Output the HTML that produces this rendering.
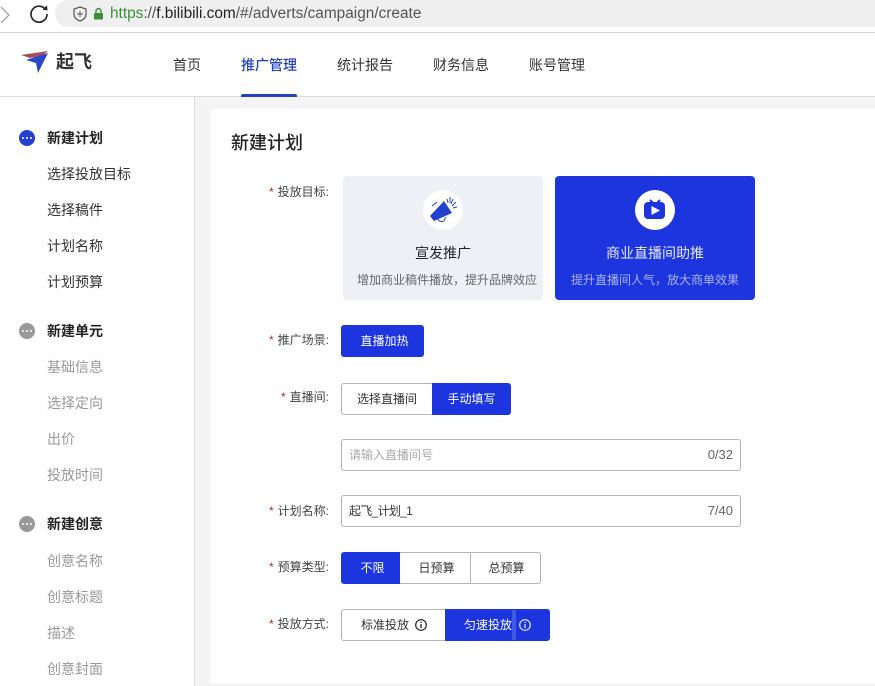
<!DOCTYPE html>
<html lang="zh"><head><meta charset="utf-8"><style>
html,body{margin:0;padding:0}
body{width:875px;height:686px;overflow:hidden;position:relative;background:#fff;font-family:"Liberation Sans","Noto Sans CJK SC",sans-serif;color:#333}
.a{position:absolute;white-space:nowrap}
.t{position:absolute;white-space:nowrap;line-height:20px;font-size:14px;transform:translateY(-50%)}
.lb{font-size:12px;color:#444;text-align:right;width:70px;left:259px}
.lb i{font-style:normal;color:#a0342c;margin-right:4px}
.btn{position:absolute;box-sizing:border-box;height:32px;line-height:30px;text-align:center;font-size:12px;border:1px solid #b5b5b5;background:#fff;color:#333}
.on{background:#1c35df;border-color:#1c35df;color:#fff}
.inp{position:absolute;left:341px;width:400px;height:32px;box-sizing:border-box;border:1px solid #b5b5b5;border-radius:3px;font-size:12px;line-height:30px;padding:0 7px;color:#333}
.inp span{position:absolute;right:7px;top:0;color:#666;font-size:13px}
.dot{position:absolute;left:19px;width:16px;height:16px;border-radius:50%}
.dot b{position:absolute;top:7px;width:2px;height:2px;background:#fff;border-radius:50%}
.s{left:47px;font-size:14px}
.h{font-weight:bold;font-size:14px;color:#222}
.g{color:#999}
</style></head><body>
<div class="a" style="left:0;top:0;width:875px;height:32px;background:#fff;border-bottom:1px solid #d4d4d4"></div>
<div class="a" style="left:55px;top:0;width:820px;height:27px;background:#efefef;border-radius:13px 0 0 13px"></div>
<svg class="a" style="left:0;top:5px" width="12" height="20"><path d="M1 2 L9 10 L1 18" fill="none" stroke="#999" stroke-width="1.2"/></svg>
<svg class="a" style="left:28px;top:3px" width="22" height="22"><path d="M17.5 6.5 A8 8 0 1 0 19 11" fill="none" stroke="#222" stroke-width="1.6"/><path d="M14.5 6.5 L19.5 7.5 L19 2.5Z" fill="#222"/></svg>
<svg class="a" style="left:72px;top:5px" width="16" height="18"><path d="M8 2 L14 4 V9 C14 13 11 15 8 16 C5 15 2 13 2 9 V4Z" fill="none" stroke="#555" stroke-width="1.2"/><path d="M8 6 V12 M5 9 H11" stroke="#555"/></svg>
<svg class="a" style="left:93px;top:7px" width="11" height="13"><path d="M3 6 V4 A2.5 2.5 0 0 1 8 4 V6" fill="none" stroke="#3a8e3a" stroke-width="1.4"/><rect x="1" y="6" width="9" height="6.5" rx="1" fill="#3a8e3a"/></svg>
<div class="a" style="left:110px;top:5px;font-size:15.4px;line-height:18px;color:#555"><span style="color:#3a8e3a">https</span>://<span style="color:#222">f.bilibili.com</span>/#/adverts/campaign/create</div>

<svg class="a" style="left:20px;top:50px" width="29" height="25"><path d="M1 5 L28 1 L22 6 L10 8Z" fill="#a84a5e"/><path d="M6 10 L28 3 L18 23 L16 13Z" fill="#2b46c8"/></svg>
<div class="a" style="left:56px;top:49px;font-size:18px;line-height:26px;font-weight:700;color:#333">起飞</div>
<div class="t" style="left:173px;top:65px;color:#333">首页</div>
<div class="t" style="left:241px;top:65px;color:#2340c0;font-weight:500">推广管理</div>
<div class="t" style="left:337px;top:65px">统计报告</div>
<div class="t" style="left:433px;top:65px">财务信息</div>
<div class="t" style="left:529px;top:65px">账号管理</div>

<div class="a" style="left:0;top:96px;width:875px;height:1px;background:#ddd"></div>
<div class="a" style="left:241px;top:94px;width:56px;height:3px;background:#2340c0;border-radius:2px 2px 0 0"></div>
<div class="a" style="left:194px;top:97px;width:681px;height:589px;background:#f4f4f5;border-left:1px solid #ddd"></div>
<div class="a" style="left:211px;top:109px;width:664px;height:574px;background:#fff;border-radius:4px 0 0 0"></div>

<div class="dot" style="top:130px;background:#2340d0"><b style="left:3px"></b><b style="left:7px"></b><b style="left:11px"></b></div>
<div class="t s h" style="top:138px">新建计划</div>
<div class="t s" style="top:174px">选择投放目标</div>
<div class="t s" style="top:210px">选择稿件</div>
<div class="t s" style="top:246px">计划名称</div>
<div class="t s" style="top:282px">计划预算</div>
<div class="dot" style="top:323px;background:#999"><b style="left:3px"></b><b style="left:7px"></b><b style="left:11px"></b></div>
<div class="t s h" style="top:331px">新建单元</div>
<div class="t s g" style="top:367px">基础信息</div>
<div class="t s g" style="top:403px">选择定向</div>
<div class="t s g" style="top:439px">出价</div>
<div class="t s g" style="top:475px">投放时间</div>
<div class="dot" style="top:516px;background:#999"><b style="left:3px"></b><b style="left:7px"></b><b style="left:11px"></b></div>
<div class="t s h" style="top:524px">新建创意</div>
<div class="t s g" style="top:561px">创意名称</div>
<div class="t s g" style="top:597px">创意标题</div>
<div class="t s g" style="top:633px">描述</div>
<div class="t s g" style="top:669px">创意封面</div>

<div class="t" style="left:231px;top:143px;font-size:18px;font-weight:500;color:#222">新建计划</div>

<div class="t lb" style="top:192px"><i>*</i>投放目标:</div>
<div class="a" style="left:343px;top:176px;width:200px;height:124px;background:#eef0f6;border-radius:4px"></div>
<div class="a" style="left:423px;top:190px;width:40px;height:40px;background:#fff;border-radius:50%"></div>
<svg class="a" style="left:423px;top:190px" width="40" height="40"><path d="M7 26 L21 11 L29 23 L11 31Z" fill="#2340d0"/><path d="M15 29 a3.5 3.5 0 0 0 7 -2" fill="none" stroke="#2340d0"/><path d="M24 9 L25 13 M27 7 L27 13 M30 9 L28 14 M33 12 L29 16 M34 17 L30 18 M9 16 L14 12" stroke="#2340d0" stroke-width="1"/></svg>
<div class="t" style="left:343px;width:200px;text-align:center;top:253px;font-size:14px;color:#222">宣发推广</div>
<div class="t" style="left:347px;width:200px;text-align:center;top:280px;font-size:12px;color:#666">增加商业稿件播放，提升品牌效应</div>
<div class="a" style="left:555px;top:176px;width:200px;height:124px;background:#1c35df;border-radius:4px"></div>
<div class="a" style="left:635px;top:190px;width:40px;height:40px;background:#fff;border-radius:50%"></div>
<svg class="a" style="left:635px;top:190px" width="40" height="40"><path d="M15 10 L18 13 M25 10 L22 13" stroke="#1c35df" stroke-width="2"/><rect x="9" y="12" width="21" height="17" rx="4" fill="#1c35df"/><path d="M16.5 16 L25 20.5 L16.5 25Z" fill="#fff"/></svg>
<div class="t" style="left:555px;width:200px;text-align:center;top:253px;font-size:14px;color:#e6e9fb">商业直播间助推</div>
<div class="t" style="left:555px;width:200px;text-align:center;top:280px;font-size:12px;color:#aab4f4">提升直播间人气，放大商单效果</div>

<div class="t lb" style="top:340px"><i>*</i>推广场景:</div>
<div class="btn on" style="left:341px;top:325px;width:83px;border-radius:3px;padding-left:4px">直播加热</div>

<div class="t lb" style="top:397px"><i>*</i>直播间:</div>
<div class="btn" style="left:341px;top:383px;width:92px;border-radius:3px 0 0 3px">选择直播间</div>
<div class="btn on" style="left:432px;top:383px;width:79px;border-radius:0 3px 3px 0">手动填写</div>

<div class="inp" style="top:439px;color:#aaa">请输入直播间号<span>0/32</span></div>

<div class="t lb" style="top:511px"><i>*</i>计划名称:</div>
<div class="inp" style="top:495px"><span style="position:static;color:#333;font-size:12px;letter-spacing:-.7px">起飞_计划_1</span><span>7/40</span></div>

<div class="t lb" style="top:567px"><i>*</i>预算类型:</div>
<div class="btn on" style="left:341px;top:552px;width:59px;border-radius:3px 0 0 3px;padding-left:4px">不限</div>
<div class="btn" style="left:400px;top:552px;width:71px;border-width:1px 1px 1px 0;padding-left:3px">日预算</div>
<div class="btn" style="left:470px;top:552px;width:71px;border-radius:0 3px 3px 0;padding-left:2px">总预算</div>

<div class="t lb" style="top:624px"><i>*</i>投放方式:</div>
<div class="btn" style="left:341px;top:609px;width:105px;border-radius:3px 0 0 3px;text-align:left;padding-left:19px">标准投放</div>
<div class="btn on" style="left:445px;top:609px;width:105px;border-radius:0 3px 3px 0;text-align:left;padding-left:18px">匀速投放</div>
<div class="a" style="left:512px;top:610px;width:4px;height:30px;background:#4059e6"></div>
<svg class="a" style="left:414px;top:618px" width="14" height="14"><circle cx="7" cy="7" r="5.3" fill="none" stroke="#222" stroke-width="1.2"/><path d="M7 6 V10.2 M7 3.6 V5" stroke="#222" stroke-width="1.3"/></svg>
<svg class="a" style="left:518px;top:618px" width="14" height="14"><circle cx="7" cy="7" r="5.3" fill="none" stroke="#dfe3fb" stroke-width="1.2"/><path d="M7 6 V10.2 M7 3.6 V5" stroke="#dfe3fb" stroke-width="1.3"/></svg>
</body></html>
